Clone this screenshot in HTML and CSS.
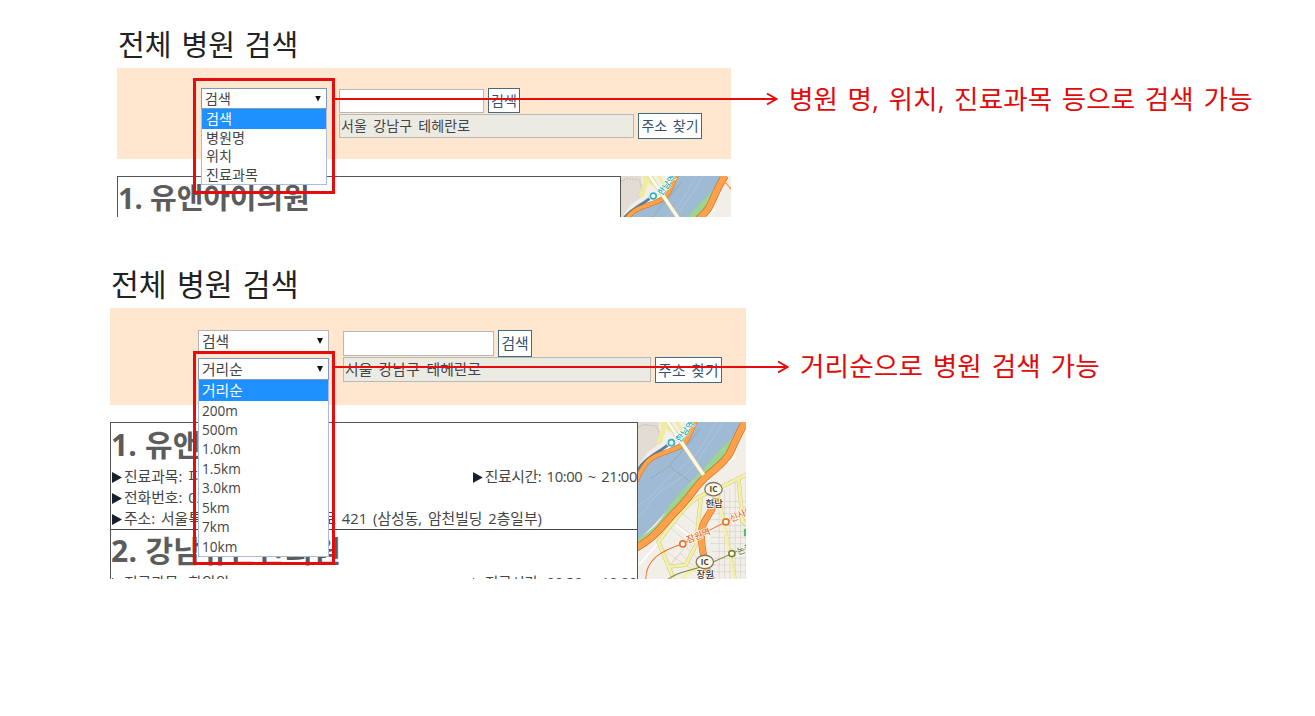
FILE: index.html
```html
<!DOCTYPE html>
<html lang="ko">
<head>
<meta charset="utf-8">
<title>전체 병원 검색</title>
<link rel="stylesheet" href="styles.css">
</head>
<body>
<main class="page">
  <section class="panel panel-a">
    <h1 class="title">전체 병원 검색</h1>
    <div class="search">
      <div class="filters">
        <div class="select active"><span>검색</span><i class="caret"></i>
          <ul class="menu"><li class="on">검색</li><li>병원명</li><li>위치</li><li>진료과목</li></ul>
        </div>
      </div>
      <div class="fields">
        <div class="line"><div class="input"></div><div class="btn">검색</div></div>
        <div class="line"><div class="input address">서울 강남구 테헤란로</div><div class="btn">주소 찾기</div></div>
      </div>
    </div>
    <div class="results">
      <div class="list"><article class="item"><h2 class="name">1. 유앤아이의원</h2></article></div>
      <svg class="map" viewBox="17 22 342 127" preserveAspectRatio="xMinYMin slice"><use href="#city"/></svg>
    </div>
  </section>

  <section class="panel panel-b">
    <h1 class="title">전체 병원 검색</h1>
    <div class="search">
      <div class="filters">
        <div class="select"><span>검색</span><i class="caret"></i></div>
        <div class="select active"><span>거리순</span><i class="caret"></i>
          <ul class="menu"><li class="on">거리순</li><li>200m</li><li>500m</li><li>1.0km</li><li>1.5km</li><li>3.0km</li><li>5km</li><li>7km</li><li>10km</li></ul>
        </div>
      </div>
      <div class="fields">
        <div class="line"><div class="input"></div><div class="btn">검색</div></div>
        <div class="line"><div class="input address">서울 강남구 테헤란로</div><div class="btn">주소 찾기</div></div>
      </div>
    </div>
    <div class="results">
      <div class="list">
        <article class="item">
          <h2 class="name">1. 유앤아이의원</h2>
          <div class="row"><p class="info">진료과목: 피부과</p><p class="info hours">진료시간: 10:00 ~ 21:00</p></div>
          <div class="row"><p class="info">전화번호: 02-540-0000</p></div>
          <div class="row"><p class="info">주소: 서울특별시 강남구 테헤란로 421 (삼성동, 암천빌딩 2층일부)</p></div>
        </article>
        <article class="item">
          <h2 class="name">2. 강남유튼한의원</h2>
          <div class="row"><p class="info">진료과목: 한의원</p><p class="info hours">진료시간: 09:30 ~ 19:00</p></div>
        </article>
      </div>
      <svg class="map" viewBox="17 22 325 470" preserveAspectRatio="xMinYMin slice">
        <defs>
          <g id="city" fill="none" stroke-linejoin="round">
            <path fill="#f2efe9" d="M0 0h380v500H0z"/>
            <path fill="#e2dcd4" d="M0 0h78l6 85-40 30-44 65z"/>
            <path stroke="#aaa49c" stroke-width="2" stroke-dasharray="5 4" d="M17 38l18-8 36 4 8 14 2 32"/>
            <path stroke="#f0ec9c" stroke-width="15" d="M88 15c12 24 0 45-9 70"/>
            <path stroke="#f0ec9c" stroke-width="10" d="M130 15l30 55M90 28l28 22"/>
            <!-- river and embankments -->
            <path fill="#9fbad3" d="M0 215C40 115 65 120 112 109S180 70 196 15H332C300 70 290 120 220 165S110 300 0 390z"/>
            <path stroke="#597f9c" stroke-width="9" d="M0 195C30 130 70 120 105 92"/>
            <path stroke="#cc7527" stroke-width="15" d="M0 228C40 120 65 126 112 108S160 92 190 15"/>
            <path stroke="#ffa04b" stroke-width="12" d="M0 228C40 120 65 126 112 108S160 92 190 15"/>
            <path stroke="#b3cce2" stroke-width="2" d="M17 270c45-20 55-50 90-80s60-40 90-80 35-65 60-95M17 305c25-10 30-50 75-80s80-50 105-90 50-70 75-115"/>
            <path stroke="#7b8c9d" stroke-width="2" stroke-dasharray="5 4" d="M55 190l55-35L205 40M112 155l73 54"/>
            <path fill="#9ed48f" d="M10 375C62 345 80 325 100 290 125 248 165 215 205 172 235 135 270 95 318 52L345 60 230 220 120 330 10 410z"/>
            <path stroke="#b7e0a9" stroke-width="2" d="M60 350c30-10 45-50 60-60"/>
            <!-- minor street grid -->
            <path fill="#f2efe9" d="M0 410L130 300 225 190 290 126 345 20H380V500H0z"/>
            <g stroke="#d5d1cb" stroke-width="2">
              <path d="M260 230v260M276 225v265M292 222v270M308 190v300M324 180v312M340 170v322M356 170v322M235 260h120M240 278h120M236 296h120M230 314h120M250 332h100M240 350h110M235 368h110M232 386h110M238 410h110M244 430h110M238 450h110M238 470h110"/>
              <path d="M110 335l70 60M125 320l70 55M150 295l60 50M85 400l120 80M120 440l40-45 40 40M100 465l45-50 45 45"/>
            </g>
            <path stroke="#fff" stroke-width="5" d="M20 450l70-80M130 330l65 50M240 175l70-50"/>
            <!-- main roads -->
            <g stroke="#cfca83" stroke-width="12"><path d="M225 235c-45 15-62 40-85 65l-62 80 45 110M205 250l-15 145M105 455l55-5 28-55M240 230l110-55M318 190l12 130 28 20"/></g>
            <g stroke="#f4f1a7" stroke-width="9"><path d="M225 235c-45 15-62 40-85 65l-62 80 45 110M205 250l-15 145M105 455l55-5 28-55M240 230l110-55M318 190l12 130 28 20M150 490l45-40M255 240l52 250"/></g>
            <path stroke="#cfca83" stroke-width="2" stroke-dasharray="6 4" d="M262 240l50 250"/>
            <path stroke="#c2722b" stroke-width="23" d="M0 405C70 370 85 335 130 290S195 205 225 182 270 145 285 126 310 65 340 20"/>
            <path stroke="#ffa04b" stroke-width="19" d="M0 405C70 370 85 335 130 290S195 205 225 182 270 145 285 126 310 65 340 20"/>
            <path stroke="#ffa04b" stroke-width="4" d="M318 15l50 60"/>
            <path stroke="#c9c49b" stroke-width="13" d="M98 10L213 180"/>
            <path stroke="#fffce0" stroke-width="10" d="M98 10L213 180"/>
            <path stroke="#c2722b" stroke-width="21" d="M250 250C240 300 210 310 207 350s10 80 10 100l20 45"/>
            <path stroke="#ffa04b" stroke-width="18" d="M250 250C240 300 210 310 207 350s10 80 10 100l20 45"/>
            <!-- subway lines -->
            <path stroke="#e8752c" stroke-width="3" d="M40 495c0-60 45-88 110-108l130-66 75-34"/>
            <path stroke="#7a8537" stroke-width="3" d="M100 500c20-25 60-30 115-47l83-37 55-25"/>
            <path fill="#54bd70" d="M334 342h20v22h-20z"/>
            <g fill="#fff" stroke-width="5"><circle cx="117" cy="84" r="9" stroke="#35b0bf"/><circle cx="151" cy="387" r="9" stroke="#e8752c"/><circle cx="280" cy="321" r="9" stroke="#e8752c"/><circle cx="298" cy="416" r="9" stroke="#7a8537"/></g>
            <g fill="#fff9e7" stroke="#7d786a" stroke-width="4"><ellipse cx="243" cy="223" rx="26" ry="20"/><ellipse cx="217" cy="441" rx="26" ry="20"/></g>
            <g class="map-text">
              <text class="ic" x="243" y="231" font-size="24" text-anchor="middle" fill="#403c34">IC</text>
              <text class="ic" x="217" y="449" font-size="24" text-anchor="middle" fill="#403c34">IC</text>
              <text x="245" y="275" font-size="28" text-anchor="middle" fill="#332e29">한남</text>
              <text x="218" y="490" font-size="28" text-anchor="middle" fill="#332e29">장원</text>
              <text transform="translate(143 84) rotate(-52)" font-size="26" fill="#20a9b9">한남역</text>
              <text transform="translate(167 385) rotate(-22)" font-size="27" fill="#e86c23">잠원역</text>
              <text transform="translate(297 322) rotate(-24)" font-size="27" fill="#e86c23">신사역</text>
              <text transform="translate(318 420) rotate(-22)" font-size="27" fill="#69752c">논현</text>
            </g>
          </g>
        </defs>
        <use href="#city"/>
      </svg>
    </div>
  </section>

  <!-- red annotations laid over the panels -->
  <div class="mark mark-a"></div>
  <svg class="arrow arrow-a" width="443" height="14" viewBox="0 0 443 14"><path d="M0 7H441M432 1.5L441.500 7l-9.500 5.500"/></svg>
  <p class="note note-a">병원 명, 위치, 진료과목 등으로 검색 가능</p>
  <div class="mark mark-b"></div>
  <svg class="arrow arrow-b" width="454" height="14" viewBox="0 0 454 14"><path d="M0 7H452M443 1.500L452.500 7l-9.500 5.500"/></svg>
  <p class="note note-b">거리순으로 병원 검색 가능</p>
</main>
</body>
</html>
```

FILE: styles.css
```css
* { box-sizing: border-box; }
body, h1, h2, p, ul { margin: 0; padding: 0; }
body { background: #fff; color: #444; font-family: "Open Sans", "Noto Sans CJK KR", sans-serif; }
.page { position: relative; width: 1315px; height: 716px; overflow: hidden; padding-top: 20px; }

.panel { display: flex; flex-direction: column; white-space: nowrap; font-size: var(--fs); }
.panel-a {
  --fs: 14px; --pad-top: 20px; --pad-left: 84px; --sel-w: 126px; --gap: 12px;
  --in-w: 145px; --ad-w: 295px; --line-h: 25.3px; --sel-h: 21px; --opt-h: 18.5px;
  width: 614px; margin-left: 117px; height: 197px;
}
.panel-b {
  --fs: 14.800px; --pad-top: 22px; --pad-left: 88px; --sel-w: 131px; --gap: 14px;
  --in-w: 151px; --ad-w: 308px; --line-h: 26.5px; --sel-h: 22px; --opt-h: 19.450px;
  width: 636px; margin-left: 110px; margin-top: 43px; height: 319px;
}
.title { height: 48px; padding-top: 1px; line-height: 48px; font-weight: 400; color: #222; word-spacing: 2.300px; }
.panel-a .title { font-size: 29.100px; }
.panel-b .title { font-size: 30.300px; padding-left: 1px; }
.panel-a .title { padding-left: 1px; }

.search { display: flex; gap: var(--gap); background: #ffe7cf; padding: var(--pad-top) 0 0 var(--pad-left); }
.panel-a .search { height: 91px; }
.panel-b .search { height: 97px; }
.filters { display: flex; flex-direction: column; gap: 6px; width: var(--sel-w); }
.select {
  position: relative; display: flex; align-items: center; justify-content: space-between;
  height: var(--sel-h); padding: 0 5px 0 3px; background: #fff; border: 1px solid #b5b5b5; line-height: 1;
}
.select.active { border-color: #7e98c5; }
.caret { width: 6px; height: 6px; background: #111; clip-path: polygon(0 0, 100% 0, 50% 100%); }
.menu {
  position: absolute; z-index: 1; top: calc(100% + 1px); left: -1px; right: -1px; list-style: none;
  background: #fff; border: 1px solid #a8bddd; border-top: 0;
}
.menu li { height: var(--opt-h); line-height: var(--opt-h); padding-left: 4px; font-size: 14.100px; }
.panel-a .menu .on { height: 19.500px; line-height: 19.500px; }
.panel-b .menu li { padding-left: 3px; font-size: 13.600px; }
.menu .on { background: #1e90ff; color: #fff; }
.panel-b .menu .on { height: 20.500px; line-height: 20px; font-size: 14.800px; }

.fields { display: flex; flex-direction: column; }
.line { display: flex; align-items: center; gap: 4px; height: var(--line-h); }
.input {
  width: var(--in-w); height: calc(var(--line-h) - 1.500px);
  background: #fff; border: 1px solid #b8b8b4;
}
.address {
  width: var(--ad-w); padding-left: 1px; background: #ebebe4;
  line-height: calc(var(--line-h) - 4px); word-spacing: 2.500px; letter-spacing: .1px;
}
.btn {
  height: var(--line-h); padding: 1px 2px 0; background: #fff; border: 1px solid #47697f;
  color: #35536f; line-height: calc(var(--line-h) - 3px); text-align: center; word-spacing: 2px;
}
.panel-a .btn { width: 32px; }
.panel-b .btn { width: 34px; }
.panel-a .address + .btn { width: 64px; }
.panel-b .address + .btn { width: 67px; }

.results { display: flex; margin-top: 17px; flex: 1; min-height: 0; overflow: hidden; }
.list { border: 1px solid #555; border-bottom: 0; overflow: hidden; }
.panel-a .list { width: 504px; }
.panel-b .list { width: 528px; }
.item + .item { border-top: 1px solid #444; }
.name { color: #5c5c5c; font-weight: 700; font-size: 29px; line-height: 41px; letter-spacing: -.1px; }
.panel-b .name { font-size: 30px; line-height: 43px; letter-spacing: .15px; }
.panel-b .item + .item .name { height: 42px; line-height: 41px; letter-spacing: .35px; }
.row { display: flex; justify-content: space-between; height: 21px; line-height: 21px; }
.info { display: flex; align-items: center; gap: 2px; white-space: pre; font-size: 14.800px; word-spacing: 2px; padding-left: 1px; }
.hours { letter-spacing: -.4px; }
.info::before { content: ""; width: 10px; height: 11px; margin-top: 2px; background: #17202a; clip-path: polygon(0 0, 100% 50%, 0 100%); }
.map { display: block; flex: 1; min-width: 0; height: 100%; }
.map-text { font-family: "Noto Sans CJK KR", sans-serif; font-weight: 500; stroke: #fff; stroke-width: 4px; paint-order: stroke; }
.ic { font-weight: 700; stroke: none; }

.mark { position: absolute; z-index: 2; left: 193px; width: 142px; border: 3px solid #e60c0c; }
.mark-a { top: 78px; height: 116px; }
.mark-b { top: 351px; height: 214px; }
.arrow { position: absolute; z-index: 2; left: 335px; fill: none; stroke: #e60c0c; stroke-width: 2; }
.arrow-a { top: 92px; }
.arrow-b { top: 360px; }
.note { position: absolute; color: #e00b0b; font-size: 26.600px; line-height: 36px; white-space: nowrap; word-spacing: 2.600px; letter-spacing: .05px; }
.note-a { left: 789px; top: 81px; }
.note-b { left: 800px; top: 348px; letter-spacing: .15px; }
```
